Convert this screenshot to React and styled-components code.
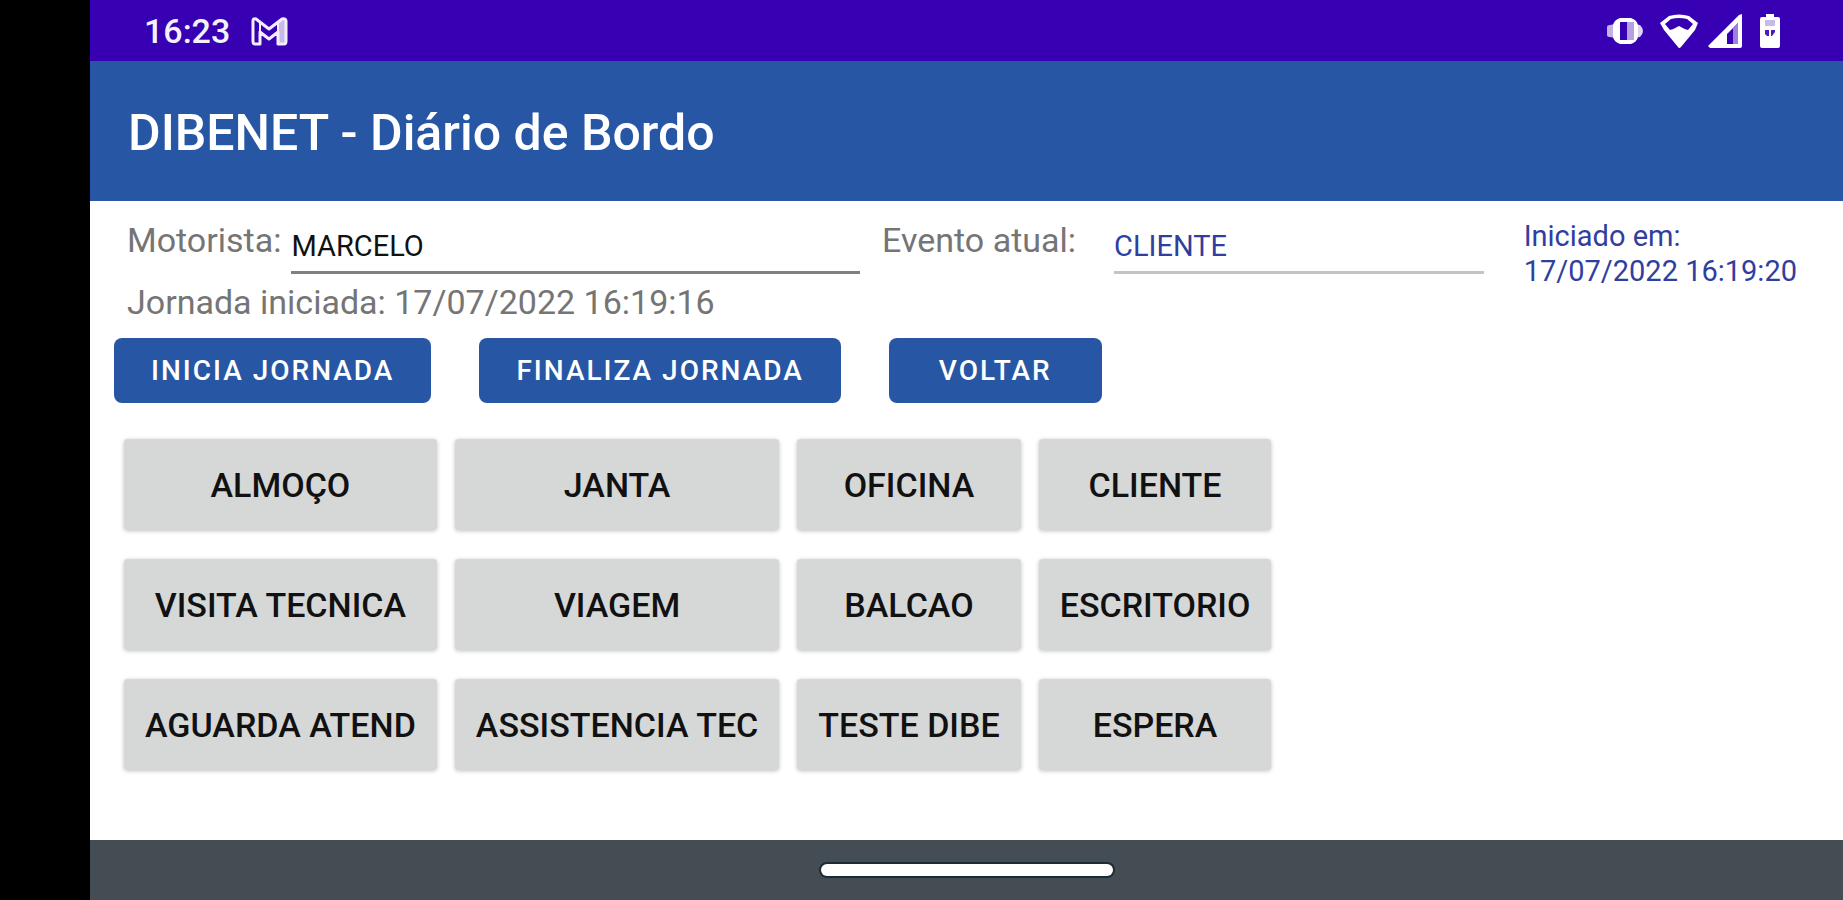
import { useState } from "react";
import styled, { createGlobalStyle } from "styled-components";

const EVENTS = [
    "ALMOÇO",
    "JANTA",
    "OFICINA",
    "CLIENTE",
    "VISITA TECNICA",
    "VIAGEM",
    "BALCAO",
    "ESCRITORIO",
    "AGUARDA ATEND",
    "ASSISTENCIA TEC",
    "TESTE DIBE",
    "ESPERA",
];

function MailIcon() {
    return (
        <svg width="38" height="30" viewBox="0 0 38 30" fill="none">
            <path d="M28 6 L35 3 V27 H28 Z" fill="#c9b8ec" />
            <path
                d="M3 5 Q3 2 6 3 L19 13 L32 3 Q36 2 36 5 V25 Q36 28 34 28 H28 V16 L19 23 L10 16 V28 H5 Q3 28 3 25 Z"
                stroke="#f1edfb"
                strokeWidth="3"
                strokeLinejoin="round"
            />
            <path d="M10 16 V7 M28 16 V7" stroke="#f1edfb" strokeWidth="2" />
        </svg>
    );
}

function VibrateIcon() {
    return (
        <svg width="44" height="30" viewBox="0 0 44 30">
            <path d="M1 11 Q1 9 4 9 L9 8 V22 L4 21 Q1 21 1 19 Z" fill="#c3b1ea" />
            <path d="M28 8 L34 9 Q37 12 37 15 Q37 18 34 21 L28 22 Z" fill="#ded3f5" />
            <path
                fillRule="evenodd"
                d="M14 2 H25 Q31 4 32 9 V21 Q31 26 25 28 H14 Q8 26 7 21 V9 Q8 4 14 2 Z M14 6 V24 H24 V6 Z"
                fill="#ffffff"
            />
            <path d="M21 6 H28 V24 H21 Z" fill="#b5a0e4" />
        </svg>
    );
}

function WifiIcon() {
    return (
        <svg width="38" height="34" viewBox="0 0 38 34">
            <path
                fillRule="evenodd"
                d="M0 9 L9 2 Q19 -1 29 2 L38 9 L35 16 L21 33 Q19 35 18 33 L4 16 Z M5 10 L10 16 Q14 15 19 12 Q24 15 28 16 L33 10 L27 5 Q19 3 11 5 Z"
                fill="#ffffff"
            />
        </svg>
    );
}

function SignalIcon() {
    return (
        <svg width="42" height="34" viewBox="0 0 42 34">
            <path
                fillRule="evenodd"
                d="M31 1 L34 0 V32 Q34 34 32 34 H2 L0 32 Z M30 9 L19 20 V30 H30 Z"
                fill="#ffffff"
            />
            <path d="M25 14 L30 9 V30 H25 Z" fill="#9c80dc" />
        </svg>
    );
}

function BatteryIcon() {
    return (
        <svg width="20" height="34" viewBox="0 0 20 34">
            <path
                d="M6 0 H14 V3 H18 Q20 3 20 5 V32 Q20 34 18 34 H2 Q0 34 0 32 V5 Q0 3 2 3 H6 Z"
                fill="#ffffff"
            />
            <path d="M5 6 H15 V12 H5 Z" fill="#c9baee" />
            <path d="M5 16 H9 V22 H7 L5 20 Z M11 16 H15 V18 L12 22 H11 Z" fill="#4a1cbc" />
        </svg>
    );
}

function App() {
    const [driver, setDriver] = useState("MARCELO");
    const [current, setCurrent] = useState("CLIENTE");

    return (
        <Screen>
            <GlobalStyle />
            <StatusBar>
                <span>16:23</span>
                <MailIcon />
                <StatusIcons>
                    <VibrateIcon />
                    <WifiIcon />
                    <SignalIcon />
                    <BatteryIcon />
                </StatusIcons>
            </StatusBar>
            <AppBar>
                <h1>DIBENET - Diário de Bordo</h1>
            </AppBar>
            <Main>
                <InfoGrid>
                    <Label htmlFor="driver">Motorista:</Label>
                    <Field
                        id="driver"
                        value={driver}
                        onChange={(e) => setDriver(e.target.value)}
                    />
                    <Label htmlFor="event" $spaced>
                        Evento atual:
                    </Label>
                    <Field id="event" value={current} readOnly $muted />
                    <StartedAt>
                        Iniciado em:
                        <br />
                        17/07/2022 16:19:20
                    </StartedAt>
                    <Journey>Jornada iniciada: 17/07/2022 16:19:16</Journey>
                </InfoGrid>
                <Actions>
                    <ActionButton type="button">INICIA JORNADA</ActionButton>
                    <ActionButton type="button">FINALIZA JORNADA</ActionButton>
                    <ActionButton type="button" $wide>
                        VOLTAR
                    </ActionButton>
                </Actions>
                <EventGrid>
                    {EVENTS.map((name) => (
                        <EventButton
                            key={name}
                            type="button"
                            onClick={() => setCurrent(name)}
                        >
                            {name}
                        </EventButton>
                    ))}
                </EventGrid>
            </Main>
            <NavBar>
                <HomeHandle type="button" aria-label="Início" />
            </NavBar>
        </Screen>
    );
}

const GlobalStyle = createGlobalStyle`
    * {
        box-sizing: border-box;
    }

    body {
        margin: 0;
        background: #000000;
        font-family: Roboto, "Liberation Sans", sans-serif;
    }

    button,
    input {
        font-family: inherit;
    }
`;

const Screen = styled.div`
    display: flex;
    flex-direction: column;
    min-height: 100vh;
    margin-left: 90px;
    background: #ffffff;
`;

const StatusBar = styled.div`
    display: flex;
    align-items: center;
    gap: 20px;
    height: 61px;
    padding: 0 63px 0 54px;
    background: #3700b3;
    color: #f4f0fc;
    font-size: 34px;
    font-weight: 500;
`;

const StatusIcons = styled.div`
    display: flex;
    align-items: center;
    gap: 10px;
    margin-left: auto;
`;

const AppBar = styled.header`
    display: flex;
    align-items: center;
    height: 140px;
    padding: 4px 38px 0;
    background: #2757a4;

    h1 {
        margin: 0;
        color: #ffffff;
        font-size: 50px;
        font-weight: 500;
    }
`;

const Main = styled.main`
    flex: 1;
    padding: 16px 46px 0 24px;
`;

const InfoGrid = styled.div`
    display: grid;
    grid-template-columns: auto 20fr auto 13fr auto;
    grid-template-rows: 57px auto;
    padding-left: 13px;
`;

const Label = styled.label`
    padding: ${({ $spaced }) => ($spaced ? "0 38px 0 22px" : "0 10px 0 0")};
    color: #757575;
    font-size: 34px;
    line-height: 46px;
`;

const Field = styled.input`
    width: 100%;
    min-width: 0;
    height: 57px;
    padding: 4px 0 0;
    border: 0;
    border-bottom: 3px solid ${({ $muted }) => ($muted ? "#c4c4c4" : "#808080")};
    border-radius: 0;
    background: transparent;
    color: ${({ $muted }) => ($muted ? "#303f9f" : "#111111")};
    font-size: 29px;
    outline: none;
`;

const StartedAt = styled.p`
    grid-column: 5;
    grid-row: 1 / 3;
    margin: 0;
    padding: 2px 0 0 40px;
    color: #303f9f;
    font-size: 29px;
    line-height: 35px;
    white-space: nowrap;
`;

const Journey = styled.p`
    grid-column: 1 / 5;
    grid-row: 2;
    margin: 0;
    padding-top: 5px;
    color: #757575;
    font-size: 34px;
    line-height: 46px;
`;

const Actions = styled.div`
    display: flex;
    gap: 48px;
    margin-top: 13px;
`;

const ActionButton = styled.button`
    height: 65px;
    padding: 0 ${({ $wide }) => ($wide ? 50 : 37)}px;
    border: 0;
    border-radius: 8px;
    background: #2757a4;
    color: #ffffff;
    font-size: 28px;
    font-weight: 500;
    letter-spacing: 2px;
`;

const EventGrid = styled.div`
    display: grid;
    grid-template-columns: repeat(4, max-content);
    gap: 29px 18px;
    margin: 36px 0 36px 10px;
`;

const EventButton = styled.button`
    height: 91px;
    padding: 0 21px;
    border: 0;
    border-radius: 4px;
    background: #d6d7d7;
    box-shadow: 0 1px 4px rgba(0, 0, 0, 0.25);
    color: #111111;
    font-size: 34px;
    font-weight: 500;
`;

const NavBar = styled.footer`
    display: flex;
    justify-content: center;
    align-items: center;
    height: 60px;
    background: #454d54;
`;

const HomeHandle = styled.button`
    width: 292px;
    height: 12px;
    padding: 0;
    border: 0;
    border-radius: 6px;
    background: #ffffff;
    box-shadow: 0 0 0 2px #1c2c37;
`;

export default App;
